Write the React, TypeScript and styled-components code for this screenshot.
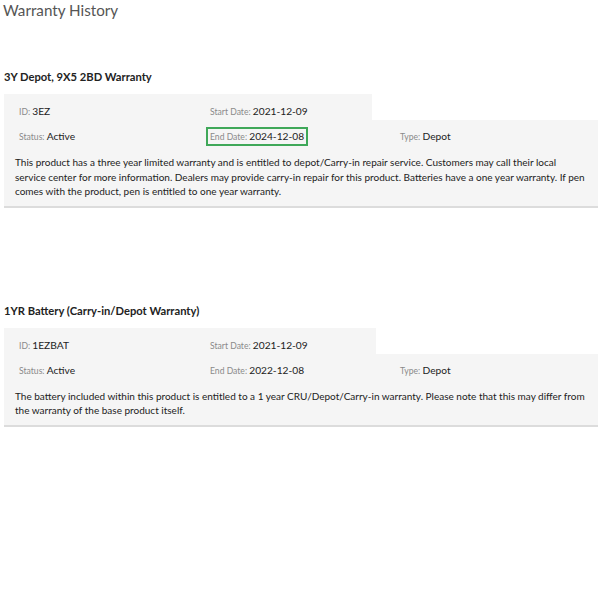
import styled, { createGlobalStyle } from 'styled-components'

const GlobalStyle = createGlobalStyle`
  body {
    margin: 0;
    background: #fff;
    font-family: Lato, "Open Sans", Arial, sans-serif;
    color: #222;
  }
`

const Page = styled.div`
  padding: 0 2px 0 4px;
`

const Title = styled.h1`
  margin: 0 0 0 -1px;
  font-size: 15.2px;
  line-height: 20px;
  font-weight: 400;
  color: #555;
`

const Section = styled.section<{ $top: number }>`
  margin-top: ${(p) => p.$top}px;
`

const SectionTitle = styled.h2`
  margin: 0 0 9px;
  font-size: 11.2px;
  line-height: 16px;
  font-weight: 700;
  color: #222;
`

const TopRow = styled.div<{ $width: number }>`
  width: ${(p) => p.$width}px;
  box-sizing: border-box;
  background: #f5f5f5;
  padding: 9px 15px 0;
  display: grid;
  grid-template-columns: 191px 1fr;
  line-height: 16px;
`

const Body = styled.div`
  background: #f5f5f5;
  border-bottom: 2px solid #dcdcdc;
  padding: 7px 11px 7px;
`

const Row = styled.div`
  display: grid;
  grid-template-columns: 191px 190px 1fr;
  padding-left: 4px;
  line-height: 18px;
`

const Field = styled.span<{ $boxed?: boolean }>`
  font-size: 10.2px;
  color: #222;
  justify-self: start;
  ${(p) =>
    p.$boxed &&
    `
    border: 2px solid #3fa859;
    padding: 0 2px;
    margin-left: -4px;
    line-height: 14px;
  `}
`

const Label = styled.span`
  font-size: 8.6px;
  color: #8a8a8a;
`

const Description = styled.p`
  margin: 9px 0 0;
  font-size: 10px;
  line-height: 14.5px;
  color: #222;
`

type Warranty = {
  name: string
  id: string
  start: string
  end: string
  status: string
  type: string
  text: string
  topWidth: number
  highlightEnd?: boolean
}

const warranties: Warranty[] = [
  {
    name: '3Y Depot, 9X5 2BD Warranty',
    id: '3EZ',
    start: '2021-12-09',
    end: '2024-12-08',
    status: 'Active',
    type: 'Depot',
    topWidth: 368,
    highlightEnd: true,
    text: 'This product has a three year limited warranty and is entitled to depot/Carry-in repair service. Customers may call their local service center for more information. Dealers may provide carry-in repair for this product. Batteries have a one year warranty. If pen comes with the product, pen is entitled to one year warranty.',
  },
  {
    name: '1YR Battery (Carry-in/Depot Warranty)',
    id: '1EZBAT',
    start: '2021-12-09',
    end: '2022-12-08',
    status: 'Active',
    type: 'Depot',
    topWidth: 372,
    text: 'The battery included within this product is entitled to a 1 year CRU/Depot/Carry-in warranty. Please note that this may differ from the warranty of the base product itself.',
  },
]

const WarrantyCard = ({ w }: { w: Warranty }) => (
  <>
    <SectionTitle>{w.name}</SectionTitle>
    <TopRow $width={w.topWidth}>
      <Field>
        <Label>ID: </Label>
        {w.id}
      </Field>
      <Field>
        <Label>Start Date: </Label>
        {w.start}
      </Field>
    </TopRow>
    <Body>
      <Row>
        <Field>
          <Label>Status: </Label>
          {w.status}
        </Field>
        <Field $boxed={w.highlightEnd}>
          <Label>End Date: </Label>
          {w.end}
        </Field>
        <Field>
          <Label>Type: </Label>
          {w.type}
        </Field>
      </Row>
      <Description>{w.text}</Description>
    </Body>
  </>
)

export default function App() {
  return (
    <>
      <GlobalStyle />
      <Page>
        <Title>Warranty History</Title>
        <Section $top={49}>
          <WarrantyCard w={warranties[0]} />
        </Section>
        <Section $top={95}>
          <WarrantyCard w={warranties[1]} />
        </Section>
      </Page>
    </>
  )
}
